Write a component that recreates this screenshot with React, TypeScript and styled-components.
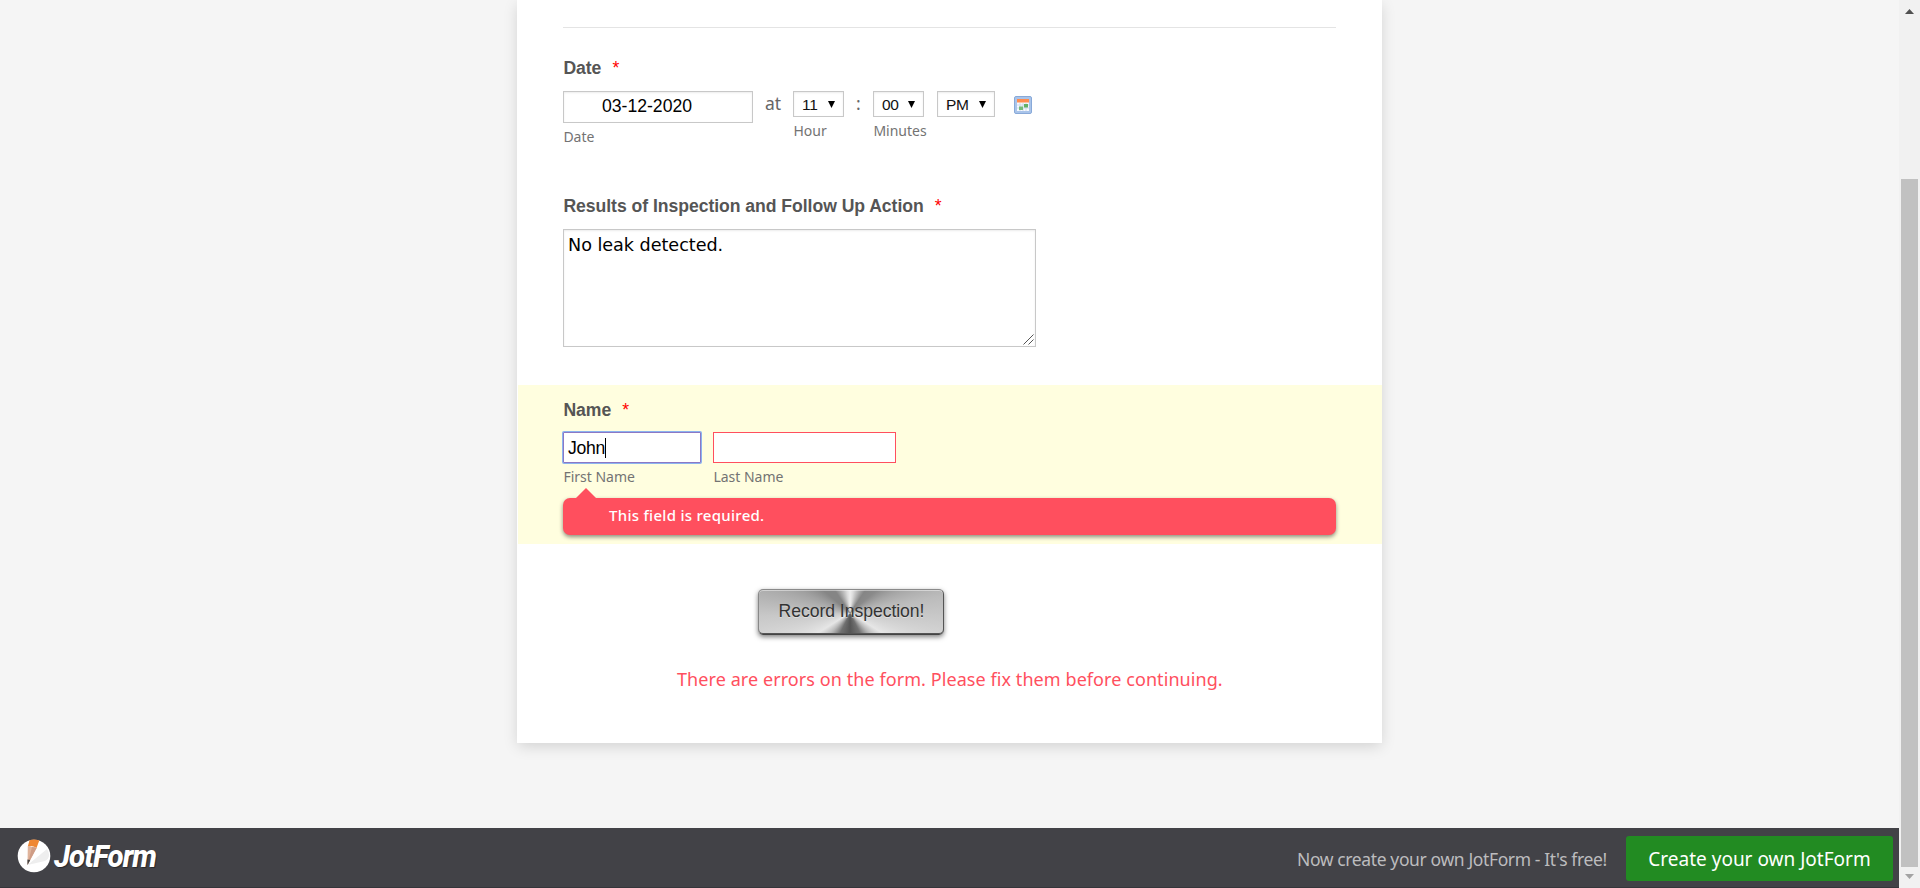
import React from "react";
import styled, { createGlobalStyle } from "styled-components";

const Global = createGlobalStyle`
  * { box-sizing: border-box; }
  body { margin: 0; background: #f5f5f5; overflow: hidden; }
  input, textarea, button { font-family: inherit; }
`;

const sans = '"Liberation Sans", Arial, sans-serif';
const humanist = '"Noto Sans", "Open Sans", sans-serif';

const Window = styled.div`
  display: flex;
  width: 1920px;
  height: 888px;
  overflow: hidden;
`;
const Page = styled.div`
  width: 1899px;
  display: flex;
  flex-direction: column;
  align-items: center;
  justify-content: space-between;
  background: #f5f5f5;
`;
const Card = styled.form`
  width: 865px;
  height: 743px;
  background: #fff;
  box-shadow: 0 4px 14px -1px rgba(0, 0, 0, 0.15);
  padding-top: 27px;
`;
const Divider = styled.div`
  height: 1px;
  margin: 0 46px;
  background: #e4e4e4;
`;
const Field = styled.section<{ $height: number; $top: number; $error?: boolean }>`
  height: ${(p) => p.$height}px;
  padding: ${(p) => p.$top}px 46px 0;
  ${(p) => p.$error && "background: #fffedf; margin-left: 1px; padding-left: 45px;"}
`;
const Label = styled.label`
  display: block;
  height: 24px;
  padding-left: 0.4px;
  font: bold 17.6px/24px ${sans};
  letter-spacing: -0.04px;
  color: #555;
  white-space: nowrap;
`;
const Star = styled.span`
  margin-left: 11px;
  font-weight: normal;
  font-size: 17.6px;
  color: #f00;
`;
const Row = styled.div<{ $top: number }>`
  display: flex;
  align-items: flex-start;
  margin-top: ${(p) => p.$top}px;
`;
const Column = styled.div<{ $gap?: number }>`
  display: flex;
  flex-direction: column;
  margin-left: ${(p) => p.$gap ?? 0}px;
`;
const Input = styled.div<{ $width: number; $height: number; $indent?: number; $state?: "focus" | "error" }>`
  width: ${(p) => p.$width}px;
  height: ${(p) => p.$height}px;
  display: flex;
  align-items: center;
  padding: 0 0 ${(p) => (p.$state ? 0 : 2)}px ${(p) => p.$indent ?? 4}px;
  background: #fff;
  border: 1px solid ${(p) => (p.$state === "focus" ? "#8b78c4" : p.$state === "error" ? "#ff4f5e" : "#c8c8c8")};
  box-shadow: ${(p) => (p.$state === "focus" ? "0 0 0 1px #8bb3f0" : p.$state === "error" ? "none" : "inset 0 1px 2px rgba(0,0,0,0.08)")};
  border-radius: ${(p) => (p.$state === "focus" ? 1 : 0)}px;
  font: 17.6px/20px ${sans};
  letter-spacing: ${(p) => (p.$state ? -0.3 : 0)}px;
  color: #000;
`;
const Caret = styled.span`
  width: 1px;
  height: 20px;
  background: #000;
`;
const SubLabel = styled.span`
  margin-top: 5px;
  padding-left: 0.4px;
  width: 0;
  white-space: nowrap;
  font: 14px/18px ${humanist};
  color: #737373;
`;
const Joiner = styled.span<{ $gap: number; $width: number }>`
  margin-left: ${(p) => p.$gap}px;
  width: ${(p) => p.$width}px;
  font: 17.5px/25px ${humanist};
  color: #666;
`;
const SelectBox = styled.div<{ $width: number }>`
  width: ${(p) => p.$width}px;
  height: 26px;
  display: flex;
  align-items: center;
  justify-content: space-between;
  padding: 2px 8px 0 8px;
  border: 1px solid #c8c8c8;
  background: #fff;
  box-shadow: inset 0 1px 2px rgba(0, 0, 0, 0.08);
  font: 15.5px/20px ${sans};
  letter-spacing: -0.3px;
  color: #111;
`;
const CalendarIcon = styled.svg`
  margin: 5px 0 0 19px;
`;
const TextArea = styled.div`
  width: 473px;
  height: 118px;
  margin-top: 11px;
  padding: 4px 4px 2px;
  display: flex;
  justify-content: space-between;
  border: 1px solid #c8c8c8;
  box-shadow: inset 0 1px 2px rgba(0, 0, 0, 0.08);
  font: 17.6px/22px "DejaVu Sans", Verdana, sans-serif;
  color: #000;
  background: #fff;
`;
const Typed = styled.span`
  letter-spacing: -0.03px;
`;
const Grip = styled.svg`
  align-self: flex-end;
  margin: 0 -3px -1px 0;
`;
const ErrorBubble = styled.div`
  position: relative;
  height: 37px;
  width: 773px;
  margin-top: 12px;
  padding-left: 46px;
  border-radius: 7px;
  background: #ff4f5e;
  box-shadow: 0 2px 4px rgba(0, 0, 0, 0.45);
  font: 500 15px/34px ${humanist};
  letter-spacing: 0.28px;
  color: #fff;
  &::before {
    content: "";
    position: absolute;
    left: 13px;
    top: -10px;
    border: 10px solid transparent;
    border-top: 0;
    border-bottom-color: #ff4f5e;
  }
`;
const SubmitButton = styled.button`
  display: block;
  width: 186px;
  height: 46px;
  margin: 45px 0 0 241px;
  padding: 0 0 2px 1px;
  border: 1px solid #666;
  border-color: #8a8a8a #555 #444 #888;
  border-radius: 5px;
  background:
    conic-gradient(from 0deg at 49.5% 52%, #ededed 0deg, #dcdcdc 8deg, #858585 34deg, #8a8a8a 50deg, #a6a6a6 66deg, #bcbcbc 80deg, #c8c8c8 92deg, #d6d6d6 106deg, #e6e6e6 122deg, #bbb 136deg, #707070 154deg, #555 180deg, #707070 206deg, #bbb 224deg, #e6e6e6 238deg, #d6d6d6 254deg, #c8c8c8 268deg, #b4b4b4 280deg, #a0a0a0 294deg, #858585 310deg, #858585 326deg, #dcdcdc 352deg, #ededed 360deg);
  box-shadow: inset 0 1px 0 rgba(255,255,255,0.45), inset 0 -1px 0 #555, 0 2px 5px rgba(0,0,0,0.5);
  font: 17.6px/20px ${sans};
  letter-spacing: -0.05px;
  color: #333;
  text-shadow: 0 1px 0 rgba(255, 255, 255, 0.4);
  white-space: nowrap;
`;
const FormError = styled.div`
  width: 546px;
  margin: 32px 0 0 160px;
  font: 18px/24px ${humanist};
  letter-spacing: 0.075px;
  color: #ff4f5e;
  white-space: nowrap;
`;
const Footer = styled.footer`
  width: 100%;
  height: 60px;
  display: flex;
  align-items: center;
  background: #424247;
  border-bottom: 1px solid #35353a;
`;
const Logo = styled.div`
  flex: 1;
  display: flex;
  align-items: center;
  padding-left: 17px;
  margin-bottom: 3px;
`;
const LogoText = styled.span`
  display: inline-block;
  margin-left: 3px;
  font: italic 800 32px/36px Roboto, sans-serif;
  letter-spacing: -1px;
  color: #fff;
  transform: scaleX(0.92);
  transform-origin: left;
  text-shadow: 1px 1px 1px rgba(0, 0, 0, 0.4);
`;
const Pitch = styled.span`
  width: 329px;
  padding-top: 3px;
  font: 17.5px/24px ${humanist};
  letter-spacing: -0.38px;
  color: #bcbcbe;
  white-space: nowrap;
`;
const Cta = styled.a`
  width: 267px;
  height: 45px;
  margin: 1px 6px 0 0;
  display: flex;
  align-items: center;
  justify-content: center;
  border-radius: 3px;
  background: #228b22;
  font: 19px/24px ${humanist};
  color: #fff;
  padding-top: 1px;
  white-space: nowrap;
`;
const Scrollbar = styled.aside`
  width: 21px;
  padding: 9px 2px 7px;
  display: flex;
  flex-direction: column;
  align-items: center;
  background: #f1f1f1;
`;
const Thumb = styled.div`
  width: 17px;
  height: 688px;
  margin: 165px 0 7px;
  background: #c1c1c1;
`;

const Select = ({ value, width }: { value: string; width: number }) => (
  <SelectBox $width={width}>
    <span>{value}</span>
    <svg width="7" height="8" viewBox="0 0 7 8"><path d="M0 0h7L3.500 7z" fill="#000" /></svg>
  </SelectBox>
);

export default function App() {
  return (
    <Window>
      <Global />
      <Page>
        <Card>
          <Divider />
          <Field $height={138} $top={28}>
            <Label>Date<Star>*</Star></Label>
            <Row $top={11}>
              <Column>
                <Input $width={190} $height={32} $indent={38}>03-12-2020</Input>
                <SubLabel>Date</SubLabel>
              </Column>
              <Joiner $gap={12} $width={28}>at</Joiner>
              <Column>
                <Select value="11" width={51} />
                <SubLabel>Hour</SubLabel>
              </Column>
              <Joiner $gap={12} $width={17}>:</Joiner>
              <Column>
                <Select value="00" width={51} />
                <SubLabel>Minutes</SubLabel>
              </Column>
              <Column $gap={13}>
                <Select value="PM" width={58} />
              </Column>
              <CalendarIcon width="18" height="18" viewBox="0 0 18 18">
                <rect x=".5" y=".5" width="17" height="17" rx="1.5" fill="#a9c4ea" stroke="#88a9d8" />
                <rect x="3" y="3" width="12" height="12" fill="#f6f9fd" />
                <rect x="3" y="3" width="12" height="3.5" fill="#ff8c50" />
                <path d="M3 9h12M3 12h12M6 7v8M9 7v8M12 7v8" stroke="#c6d4e8" strokeWidth=".8" />
                <rect x="5" y="10.5" width="4" height="3.5" fill="#75bb79" />
                <rect x="10" y="8" width="4" height="3.5" fill="#62b068" />
              </CalendarIcon>
            </Row>
          </Field>
          <Field $height={219} $top={28}>
            <Label>Results of Inspection and Follow Up Action<Star>*</Star></Label>
            <TextArea>
              <Typed>No leak detected.</Typed>
              <Grip width="11" height="11" viewBox="0 0 11 11"><path d="M.5 10.5l10-10M5.5 10.5l5-5" stroke="#555" fill="none" /></Grip>
            </TextArea>
          </Field>
          <Field $height={159} $top={13} $error>
            <Label>Name<Star>*</Star></Label>
            <Row $top={10}>
              <Column>
                <Input $width={138} $height={31} $state="focus">John<Caret /></Input>
                <SubLabel>First Name</SubLabel>
              </Column>
              <Column $gap={12}>
                <Input $width={183} $height={31} $state="error" />
                <SubLabel>Last Name</SubLabel>
              </Column>
            </Row>
            <ErrorBubble>This field is required.</ErrorBubble>
          </Field>
          <SubmitButton type="button">Record Inspection!</SubmitButton>
          <FormError>There are errors on the form. Please fix them before continuing.</FormError>
        </Card>
        <Footer>
          <Logo>
            <svg width="34" height="34" viewBox="0 0 34 34">
              <circle cx="17" cy="17" r="16.3" fill="#fff" />
              <path d="M10.500 26L30 10Q35 18 28 22z" fill="#eee" />
              <path d="M12.500 1.300Q17-.5 22.300 1.600L19.500 9Q15 6 10.800 7.500z" fill="#ef8733" />
              <path d="M10.800 7.300q2-1 4 .6q3-.8 4.800 1L10.500 26z" fill="#e0b49c" />
              <path d="M15 8l4.600.9L10.500 26z" fill="#cf9d86" />
              <path d="M10.400 20.500l2.800.6-2.700 5z" fill="#444" />
            </svg>
            <LogoText>JotForm</LogoText>
          </Logo>
          <Pitch>Now create your own JotForm - It's free!</Pitch>
          <Cta>Create your own JotForm</Cta>
        </Footer>
      </Page>
      <Scrollbar>
        <svg width="9" height="5" viewBox="0 0 9 5"><path d="M0 5L4.500 0 9 5z" fill="#505050" /></svg>
        <Thumb />
        <svg width="9" height="5" viewBox="0 0 9 5"><path d="M0 0h9L4.500 5z" fill="#a3a3a3" /></svg>
      </Scrollbar>
    </Window>
  );
}
